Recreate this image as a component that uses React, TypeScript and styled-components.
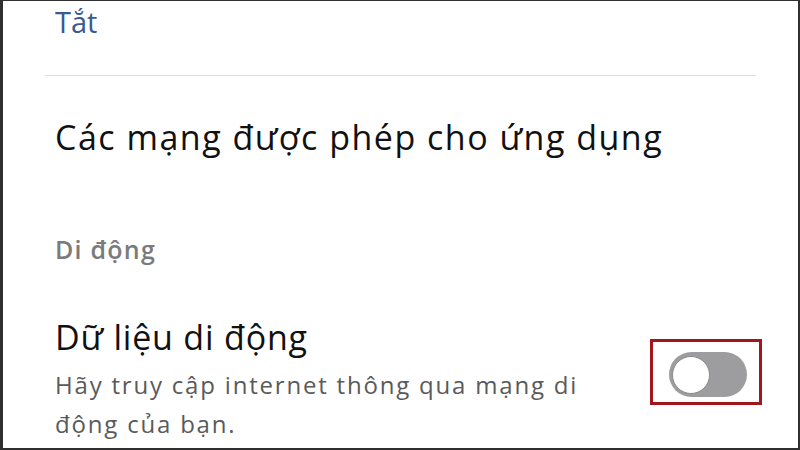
import React from "react";
import styled, { createGlobalStyle } from "styled-components";

const Global = createGlobalStyle`
  html, body { margin: 0; padding: 0; background: #ffffff; }
  body { font-family: "Open Sans", "Noto Sans", "Liberation Sans", sans-serif; }
  * { box-sizing: border-box; }
`;

const Frame = styled.div`
  width: 800px;
  height: 450px;
  overflow: hidden;
  background: #ffffff;
  border-style: solid;
  border-color: #2f2f2f;
  border-width: 1px 2px 2px 3px;
  display: flex;
  flex-direction: column;
`;

const TopSection = styled.div`
  padding: 1px 0 33px 52px;
`;

const ValueText = styled.div`
  font-size: 29px;
  line-height: 40px;
  color: #3a5a92;
  height: 40px;
`;

const Divider = styled.div`
  height: 1px;
  margin: 0 42px;
  background: #dedede;
`;

const Heading = styled.div<{ $top: number }>`
  margin-top: ${(p) => p.$top}px;
  padding-left: 52px;
  font-size: 34px;
  line-height: 44px;
  letter-spacing: 1.5px;
  color: #111111;
`;

const SectionLabel = styled.div`
  margin-top: 74px;
  padding-left: 52px;
  font-size: 25px;
  line-height: 32px;
  font-weight: 600;
  letter-spacing: 1.2px;
  color: #7b7b7b;
`;

const SettingRow = styled.div`
  margin-top: 50px;
  padding: 0 36px 0 52px;
  display: flex;
  align-items: flex-start;
  justify-content: space-between;
`;

const TextCol = styled.div`
  display: flex;
  flex-direction: column;
  width: 570px;
`;

const Title = styled.div`
  font-size: 34px;
  line-height: 44px;
  letter-spacing: 0.8px;
  color: #111111;
`;

const Desc = styled.div`
  margin-top: 6px;
  font-size: 24px;
  line-height: 39px;
  letter-spacing: 1.8px;
  color: #5a5a5a;
`;

const Highlight = styled.div`
  margin-top: 24px;
  width: 112px;
  height: 66px;
  border: 3px solid #a3161b;
  padding: 10px 12px 5px 16px;
  display: flex;
`;

const Track = styled.div`
  width: 78px;
  height: 45px;
  border-radius: 23px;
  background: #9d9d9f;
  display: flex;
  align-items: center;
  padding-left: 3px;
`;

const Thumb = styled.div`
  width: 38px;
  height: 38px;
  border-radius: 50%;
  background: #ffffff;
  border: 1px solid #8c8c8c;
`;

export default function App() {
  return (
    <>
      <Global />
      <Frame>
        <TopSection>
          <ValueText>Tắt</ValueText>
        </TopSection>
        <Divider />
        <Heading $top={39}>Các mạng được phép cho ứng dụng</Heading>
        <SectionLabel>Di động</SectionLabel>
        <SettingRow>
          <TextCol>
            <Title>Dữ liệu di động</Title>
            <Desc>Hãy truy cập internet thông qua mạng di động của bạn.</Desc>
          </TextCol>
          <Highlight>
            <Track>
              <Thumb />
            </Track>
          </Highlight>
        </SettingRow>
      </Frame>
    </>
  );
}
